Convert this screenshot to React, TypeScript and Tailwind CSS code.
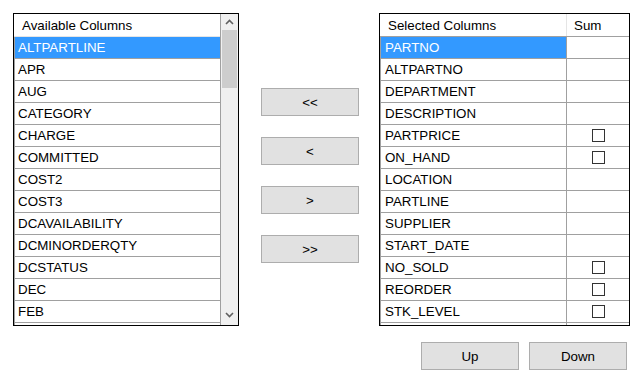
const available = [
  'ALTPARTLINE',
  'APR',
  'AUG',
  'CATEGORY',
  'CHARGE',
  'COMMITTED',
  'COST2',
  'COST3',
  'DCAVAILABILITY',
  'DCMINORDERQTY',
  'DCSTATUS',
  'DEC',
  'FEB',
];

const selected: { name: string; sum: boolean }[] = [
  { name: 'PARTNO', sum: false },
  { name: 'ALTPARTNO', sum: false },
  { name: 'DEPARTMENT', sum: false },
  { name: 'DESCRIPTION', sum: false },
  { name: 'PARTPRICE', sum: true },
  { name: 'ON_HAND', sum: true },
  { name: 'LOCATION', sum: false },
  { name: 'PARTLINE', sum: false },
  { name: 'SUPPLIER', sum: false },
  { name: 'START_DATE', sum: false },
  { name: 'NO_SOLD', sum: true },
  { name: 'REORDER', sum: true },
  { name: 'STK_LEVEL', sum: true },
];

function Chevron({ up }: { up?: boolean }) {
  return (
    <svg width="9" height="6" viewBox="0 0 9 6" className="block">
      <polyline
        points={up ? '1,5 4.5,1.5 8,5' : '1,1 4.5,4.5 8,1'}
        fill="none"
        stroke="#606060"
        strokeWidth="1.6"
      />
    </svg>
  );
}

function Button({ label }: { label: string }) {
  return (
    <button className="h-[28px] w-[98px] pt-[1px] bg-[#e1e1e1] border border-[#adadad] text-[13.33px] text-black flex items-center justify-center">
      {label}
    </button>
  );
}

export default function App() {
  return (
    <div
      className="w-[634px] h-[377px] bg-white pt-[13px] overflow-hidden"
      style={{ fontFamily: '"Liberation Sans", Arial, sans-serif' }}
    >
      <div className="flex items-start">
        {/* Available columns */}
        <div className="ml-[13px] w-[226px] h-[313px] border border-black flex overflow-hidden">
          <div className="flex-1 flex flex-col">
            <div className="h-[23px] shrink-0 flex items-center pl-[8px] pt-[1px] text-[13.33px] text-black border-b border-[#e5e5e5]">
              Available Columns
            </div>
            {available.map((name, i) => (
              <div
                key={name}
                className={`h-[22px] shrink-0 flex items-center pl-[3px] pt-[1px] text-[13.33px] border-l border-b border-[#a0a0a0] ${
                  i === 0 ? 'bg-[#3399ff] text-white' : 'text-black'
                }`}
              >
                {name}
              </div>
            ))}
            <div className="h-[22px] shrink-0 border-l border-[#a0a0a0]" />
          </div>
          {/* Scrollbar */}
          <div className="w-[18px] shrink-0 bg-[#f0f0f0] border-l border-[#a0a0a0] flex flex-col items-center">
            <div className="h-[16px] w-full flex items-center justify-center">
              <Chevron up />
            </div>
            <div className="w-[15px] h-[58px] bg-[#cdcdcd]" />
            <div className="flex-1" />
            <div className="h-[20px] w-full flex items-center justify-center">
              <Chevron />
            </div>
          </div>
        </div>

        {/* Move buttons */}
        <div className="ml-[22px] mt-[75px] flex flex-col gap-[21px]">
          <Button label="<<" />
          <Button label="<" />
          <Button label=">" />
          <Button label=">>" />
        </div>

        {/* Selected columns */}
        <div className="ml-[20px] w-[251px] h-[313px] border border-black flex flex-col overflow-hidden">
          <div className="h-[23px] shrink-0 flex border-b border-[#a0a0a0] text-[13.33px] text-black">
            <div className="w-[187px] pl-[8px] pt-[1px] flex items-center border-r border-[#e5e5e5]">
              Selected Columns
            </div>
            <div className="flex-1 pl-[7px] pt-[1px] flex items-center">Sum</div>
          </div>
          {selected.map((row, i) => (
            <div
              key={row.name}
              className="h-[22px] shrink-0 flex border-l border-b border-[#a0a0a0] text-[13.33px]"
            >
              <div
                className={`w-[186px] pl-[4px] pt-[1px] flex items-center border-r border-[#a0a0a0] ${
                  i === 0 ? 'bg-[#3399ff] text-white' : 'text-black'
                }`}
              >
                {row.name}
              </div>
              <div className="flex-1 flex items-center justify-center">
                {row.sum && <div className="w-[13px] h-[13px] border border-[#333333] bg-white" />}
              </div>
            </div>
          ))}
          <div className="h-[22px] shrink-0 flex border-l border-[#a0a0a0]">
            <div className="w-[186px] border-r border-[#a0a0a0]" />
          </div>
        </div>
      </div>

      {/* Order buttons */}
      <div className="mt-[16px] flex justify-end gap-[10px] pr-[7px]">
        <Button label="Up" />
        <Button label="Down" />
      </div>
    </div>
  );
}
